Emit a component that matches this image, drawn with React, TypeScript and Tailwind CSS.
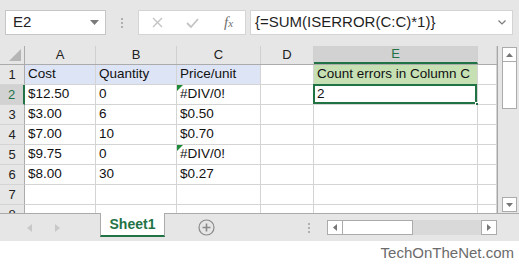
import React from 'react'

type Cell = { v: string; err?: boolean }

const cols = [
  { key: 'A', w: 'w-[71px]' },
  { key: 'B', w: 'w-[81px]' },
  { key: 'C', w: 'w-[84px]' },
  { key: 'D', w: 'w-[53px]' },
  { key: 'E', w: 'w-[164px]' },
  { key: 'F', w: 'w-[19px]' },
]

const rows: Cell[][] = [
  [{ v: 'Cost' }, { v: 'Quantity' }, { v: 'Price/unit' }, { v: '' }, { v: 'Count errors in Column C' }, { v: '' }],
  [{ v: '$12.50' }, { v: '0' }, { v: '#DIV/0!', err: true }, { v: '' }, { v: '2' }, { v: '' }],
  [{ v: '$3.00' }, { v: '6' }, { v: '$0.50' }, { v: '' }, { v: '' }, { v: '' }],
  [{ v: '$7.00' }, { v: '10' }, { v: '$0.70' }, { v: '' }, { v: '' }, { v: '' }],
  [{ v: '$9.75' }, { v: '0' }, { v: '#DIV/0!', err: true }, { v: '' }, { v: '' }, { v: '' }],
  [{ v: '$8.00' }, { v: '30' }, { v: '$0.27' }, { v: '' }, { v: '' }, { v: '' }],
  [{ v: '' }, { v: '' }, { v: '' }, { v: '' }, { v: '' }, { v: '' }],
  [{ v: '' }, { v: '' }, { v: '' }, { v: '' }, { v: '' }, { v: '' }],
]

function cellBg(r: number, c: number) {
  if (r === 0 && c < 3) return 'bg-[#dde4f5]'
  if (r === 0 && c === 4) return 'bg-[#c6e0b4]'
  return 'bg-white'
}

export default function App() {
  return (
    <div className="w-[519px] h-[266px] bg-white flex flex-col overflow-hidden font-['Liberation_Sans',Arial,sans-serif]">
      {/* formula bar */}
      <div className="h-[46px] bg-[#e6e6e6] flex items-start pt-[10px] pl-[5px] shrink-0">
        <div className="w-[101px] h-[25px] bg-white border border-[#c6c6c6] flex items-center justify-between pl-[7px] pr-[6px] text-[15px] text-[#222]">
          <span>E2</span>
          <svg width="9" height="5" viewBox="0 0 9 5"><path d="M0 0h9L4.5 5z" fill="#7a7a7a" /></svg>
        </div>
        <div className="w-[32px] h-[25px] flex flex-col items-center justify-center gap-[2px]">
          <span className="w-[2px] h-[2px] bg-[#b0b0b0]" />
          <span className="w-[2px] h-[2px] bg-[#b0b0b0]" />
          <span className="w-[2px] h-[2px] bg-[#b0b0b0]" />
        </div>
        <div className="w-[108px] h-[25px] bg-white border border-[#d4d4d4] flex items-center pl-[13px]">
          <svg width="11" height="11" viewBox="0 0 11 11"><path d="M1 1l9 9M10 1l-9 9" stroke="#c4c4c4" strokeWidth="1.4" /></svg>
          <svg className="ml-[23px]" width="13" height="10" viewBox="0 0 13 10"><path d="M1 5l4 4 7-8" stroke="#c4c4c4" strokeWidth="1.8" fill="none" /></svg>
          <span className="ml-[25px] font-['Liberation_Serif',serif] italic text-[15px] text-[#707070] leading-none">f<span className="text-[11px]">x</span></span>
        </div>
        <div className="ml-[4px] w-[263px] h-[25px] bg-white border border-[#d4d4d4] flex items-center justify-between pl-[4px] pr-[6px] text-[15px] text-[#1f1f1f]">
          <span>{'{=SUM(ISERROR(C:C)*1)}'}</span>
          <svg width="8" height="5" viewBox="0 0 8 5"><path d="M0.5 0.5l3.5 3.5 3.5-3.5" stroke="#7a7a7a" strokeWidth="1.2" fill="none" /></svg>
        </div>
      </div>

      {/* grid + vertical scrollbar */}
      <div className="h-[167px] flex shrink-0 bg-[#e6e6e6]">
        <div className="w-[498px] border-r border-[#a6a6a6] overflow-hidden bg-white">
          <div className="flex h-[19px] bg-[#e6e6e6] border-b border-[#ababab] text-[13px] text-[#222]">
            <div className="w-[25px] shrink-0 border-r border-[#ababab] relative">
              <svg className="absolute right-[3px] bottom-[3px]" width="12" height="12" viewBox="0 0 12 12"><path d="M12 0v12H0z" fill="#b5b5b5" /></svg>
            </div>
            {cols.map((c) => (
              <div
                key={c.key}
                className={`${c.w} shrink-0 border-r border-[#d0d0d0] flex items-center justify-center ${c.key === 'E' ? 'bg-[#d2d2d2] text-[#217346] border-b-2 border-b-[#217346]' : ''}`}
              >
                {c.key === 'F' ? '' : c.key}
              </div>
            ))}
          </div>
          {rows.map((row, r) => (
            <div key={r} className="flex h-[20px] text-[13.5px] text-[#111]">
              <div
                className={`w-[25px] shrink-0 border-r border-b border-[#ababab] border-b-[#d4d4d4] flex items-center justify-center text-[13px] ${r === 1 ? 'bg-[#d2d2d2] text-[#217346] border-r-2 border-r-[#217346]' : 'bg-[#e6e6e6] text-[#222]'}`}
              >
                {r + 1}
              </div>
              {row.map((cell, c) => (
                <div
                  key={c}
                  className={`${cols[c].w} shrink-0 border-r border-b border-[#d4d4d4] flex items-center pl-[3px] relative ${cellBg(r, c)}`}
                >
                  {cell.err && (
                    <svg className="absolute left-0 top-0" width="6" height="6" viewBox="0 0 6 6"><path d="M0 0h6L0 6z" fill="#1e8a3a" /></svg>
                  )}
                  <span className="whitespace-nowrap">{cell.v}</span>
                  {r === 1 && c === 4 && (
                    <>
                      <div className="absolute left-[-1px] top-[-1px] right-0 bottom-0 border-2 border-[#217346]" />
                      <div className="absolute right-[-3px] bottom-[-3px] w-[5px] h-[5px] bg-[#217346] border border-white" />
                    </>
                  )}
                </div>
              ))}
            </div>
          ))}
        </div>
        <div className="flex-1 flex flex-col items-center pt-[1px] pl-[2px]">
          <div className="w-[15px] h-[15px] bg-white border border-[#ababab] flex items-center justify-center">
            <svg width="7" height="4" viewBox="0 0 7 4"><path d="M0 4h7L3.5 0z" fill="#777" /></svg>
          </div>
          <div className="w-[15px] h-[47px] bg-white border border-[#ababab] border-t-0" />
          <div className="flex-1" />
          <div className="w-[15px] h-[15px] bg-white border border-[#ababab] flex items-center justify-center mb-[1px]">
            <svg width="7" height="4" viewBox="0 0 7 4"><path d="M0 0h7L3.5 4z" fill="#777" /></svg>
          </div>
        </div>
      </div>

      {/* sheet tabs */}
      <div className="h-[28px] bg-[#e6e6e6] border-t border-[#ababab] flex items-start shrink-0">
        <div className="w-[100px] h-[27px] flex items-center pl-[27px] gap-[23px]">
          <svg width="5" height="8" viewBox="0 0 5 8"><path d="M5 0v8L0 4z" fill="#c8c8c8" /></svg>
          <svg width="5" height="8" viewBox="0 0 5 8"><path d="M0 0v8l5-4z" fill="#c8c8c8" /></svg>
        </div>
        <div className="-mt-[1px] w-[65px] h-[24px] bg-white border-x border-[#ababab] border-b-2 border-b-[#217346] flex items-center justify-center text-[14px] font-bold text-[#217346]">
          Sheet1
        </div>
        <div className="w-[82px] h-[27px] flex items-center justify-center">
          <svg width="17" height="17" viewBox="0 0 17 17">
            <circle cx="8.5" cy="8.5" r="7.5" stroke="#8a8a8a" strokeWidth="1.2" fill="none" />
            <path d="M8.5 4.5v8M4.5 8.5h8" stroke="#8a8a8a" strokeWidth="1.6" />
          </svg>
        </div>
        <div className="w-[80px] h-[27px] flex flex-col items-end justify-center gap-[2px] pr-[17px]">
          <span className="w-[2px] h-[2px] bg-[#b0b0b0]" />
          <span className="w-[2px] h-[2px] bg-[#b0b0b0]" />
          <span className="w-[2px] h-[2px] bg-[#b0b0b0]" />
        </div>
        <div className="mt-[6px] w-[170px] h-[15px] flex bg-[#d9d9d9]">
          <div className="w-[16px] h-[15px] bg-white border border-[#ababab] flex items-center justify-center">
            <svg width="4" height="7" viewBox="0 0 4 7"><path d="M4 0v7L0 3.5z" fill="#777" /></svg>
          </div>
          <div className="w-[70px] h-[15px] bg-white border border-[#ababab] border-l-0" />
          <div className="flex-1" />
          <div className="w-[16px] h-[15px] bg-white border border-[#ababab] flex items-center justify-center">
            <svg width="4" height="7" viewBox="0 0 4 7"><path d="M0 0v7l4-3.5z" fill="#777" /></svg>
          </div>
        </div>
      </div>

      {/* footer */}
      <div className="flex-1 bg-white flex items-center justify-end pr-[5px] text-[15px] text-[#6b6b6b]">
        TechOnTheNet.com
      </div>
    </div>
  )
}
